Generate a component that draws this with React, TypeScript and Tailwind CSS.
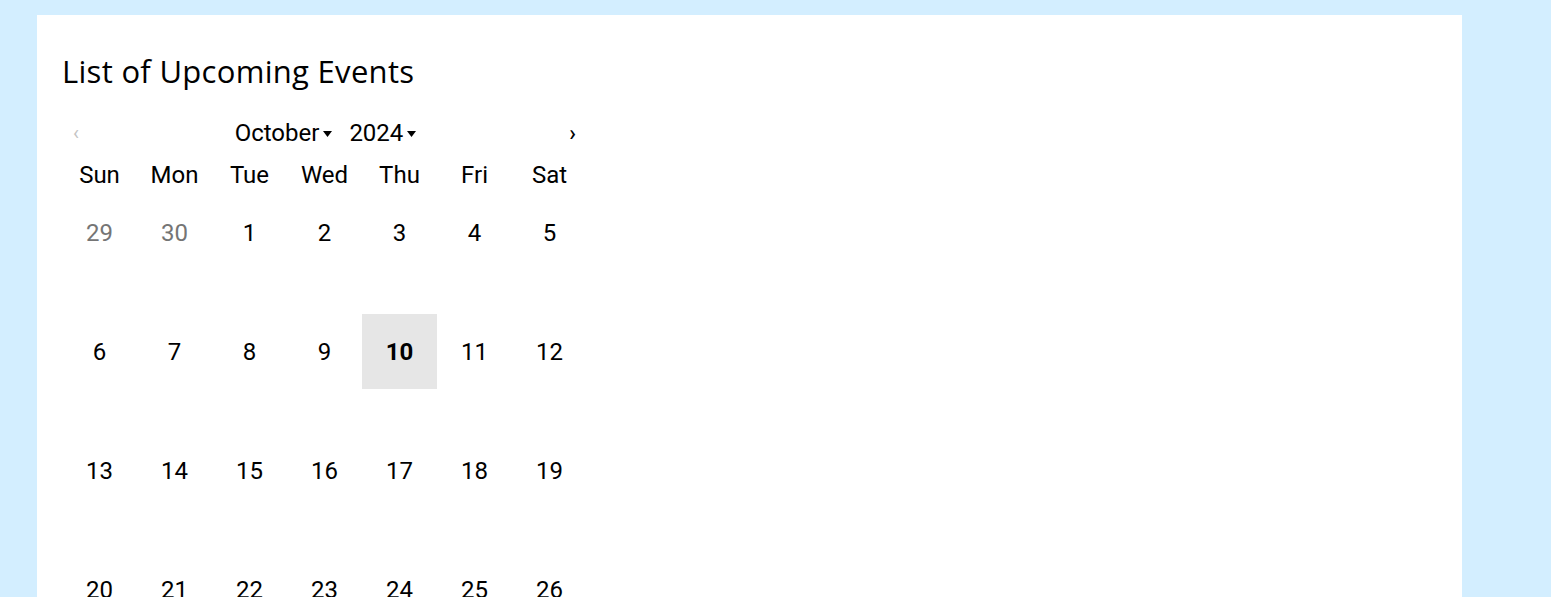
const weekDays = ["Sun", "Mon", "Tue", "Wed", "Thu", "Fri", "Sat"];

type Day = { n: number; muted?: boolean; today?: boolean };

const weeks: Day[][] = [
  [{ n: 29, muted: true }, { n: 30, muted: true }, { n: 1 }, { n: 2 }, { n: 3 }, { n: 4 }, { n: 5 }],
  [{ n: 6 }, { n: 7 }, { n: 8 }, { n: 9 }, { n: 10, today: true }, { n: 11 }, { n: 12 }],
  [{ n: 13 }, { n: 14 }, { n: 15 }, { n: 16 }, { n: 17 }, { n: 18 }, { n: 19 }],
  [{ n: 20 }, { n: 21 }, { n: 22 }, { n: 23 }, { n: 24 }, { n: 25 }, { n: 26 }],
  [{ n: 27 }, { n: 28 }, { n: 29 }, { n: 30 }, { n: 31 }, { n: 1, muted: true }, { n: 2, muted: true }],
];

// small solid caret used by the month / year pickers
const Caret = () => (
  <svg width="9" height="6" viewBox="0 0 9 6" className="ml-[4px] mt-[2px]">
    <path d="M0 0 L9 0 L4.5 6 Z" fill="#000" />
  </svg>
);

const App = () => {
  return (
    <div className="min-h-screen bg-[#d3eeff] pt-[15px] pl-[37px]">
      <div className="w-[1425px] min-h-[600px] bg-white pl-[25px] pt-[34px]">
        {/* Heading */}
        <h2 className="text-[31px] leading-[44px] text-black font-['Open_Sans',sans-serif] tracking-[0.3px]">
          List of Upcoming Events
        </h2>

        {/* Calendar */}
        <div className="mt-[18px] w-[525px] font-['Roboto',sans-serif] text-black">
          <div className="flex h-[44px] items-center">
            <button className="w-[30px] text-left pl-[11px] text-[20px] text-[#c4c4c4]">‹</button>
            <div className="flex flex-1 items-center justify-center pl-[2px] text-[24px]">
              <span className="flex items-center">
                October
                <Caret />
              </span>
              <span className="ml-[17px] flex items-center">
                2024
                <Caret />
              </span>
            </div>
            <button className="w-[30px] text-right pr-[11px] text-[22px] font-medium">›</button>
          </div>

          <div className="grid h-[40px] grid-cols-7 items-center text-center text-[24px]">
            {weekDays.map((d) => (
              <span key={d}>{d}</span>
            ))}
          </div>

          <div className="flex flex-col gap-[44px]">
            {weeks.map((week, i) => (
              <div key={i} className="grid grid-cols-7">
                {week.map((day, j) => (
                  <div
                    key={j}
                    className={`flex h-[75px] items-center justify-center text-[24px] ${
                      day.today ? "bg-[#e6e6e6] font-bold" : ""
                    } ${day.muted ? "text-[#757575]" : ""}`}
                  >
                    {day.n}
                  </div>
                ))}
              </div>
            ))}
          </div>
        </div>
      </div>
    </div>
  );
};

export default App;
